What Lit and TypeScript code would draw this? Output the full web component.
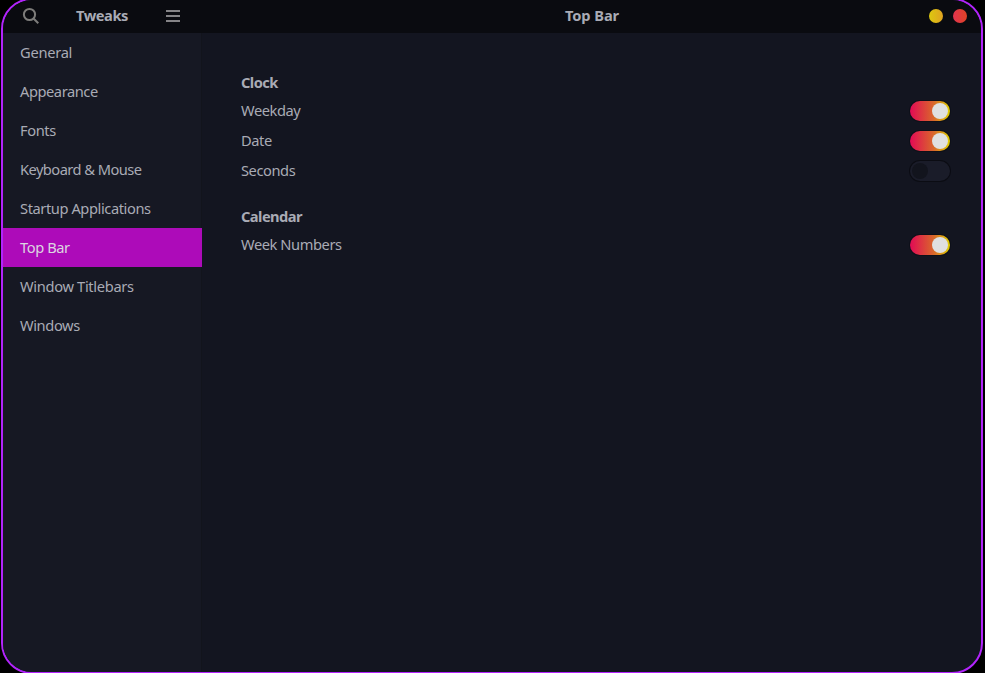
import { LitElement, html, css } from "lit";
import { customElement, property } from "lit/decorators.js";
import { classMap } from "lit/directives/class-map.js";
import { styleMap } from "lit/directives/style-map.js";

@customElement("tweak-switch")
class TweakSwitch extends LitElement {
  @property({ type: Boolean, reflect: true }) on = false;

  static styles = css`
    :host {
      display: flex;
      box-sizing: border-box;
      width: 40px;
      height: 20px;
      padding: 2px;
      border-radius: 10px;
      background: #1a1c29;
      box-shadow: 0 0 0 1px #0b0c13;
    }
    :host([on]) {
      justify-content: flex-end;
      background: linear-gradient(to right, #e20a55, #d9692a 60%, #e0d000);
      box-shadow: 0 0 0 1px #0e1019;
    }
    .knob {
      width: 16px;
      height: 16px;
      border-radius: 50%;
      background: #12141d;
    }
    :host([on]) .knob {
      background: #e0e0e0;
    }
  `;

  render() {
    return html`<div class="knob"></div>`;
  }
}

/* Each page label with its tracking in pixels. */
const PAGES: [string, number][] = [
  ["General", -0.27],
  ["Appearance", -0.45],
  ["Fonts", -0.42],
  ["Keyboard & Mouse", -0.55],
  ["Startup Applications", -0.42],
  ["Top Bar", -0.42],
  ["Window Titlebars", -0.33],
  ["Windows", -0.4],
];

const GROUPS = [
  {
    title: "Clock",
    rows: [
      { label: "Weekday", on: true },
      { label: "Date", on: true },
      { label: "Seconds", on: false },
    ],
  },
  { title: "Calendar", rows: [{ label: "Week Numbers", on: true }] },
];

@customElement("app-root")
class AppRoot extends LitElement {
  @property() current = "Top Bar";

  static styles = css`
    :host {
      display: block;
      height: 673px;
      overflow: hidden;
      background: #000;
      color: #a9abb5;
      font: 14.67px/20px "Noto Sans", sans-serif;
    }
    .window {
      box-sizing: border-box;
      width: 982px;
      height: 676px;
      margin: -2px 0 0 1px;
      border: 2px solid #b224fb;
      border-radius: 31px;
      overflow: hidden;
      display: grid;
      grid-template: 33px 1fr / 199px 1fr;
      background: #131520;
    }
    .bar {
      display: flex;
      align-items: center;
      background: #0a0b10;
      font-weight: 700;
    }
    .left {
      padding: 0 22px 0 19px;
      justify-content: space-between;
      letter-spacing: -0.45px;
    }
    .left span {
      margin-right: 2px;
    }
    .right {
      justify-content: center;
      position: relative;
      letter-spacing: -0.1px;
    }
    .right span {
      margin-left: 1px;
    }
    .bar span {
      margin-top: -4px;
    }
    .bar svg {
      display: block;
      margin-top: -1px;
    }
    .buttons {
      position: absolute;
      right: 14px;
      top: 9px;
      display: flex;
      gap: 10px;
    }
    .dot {
      width: 14px;
      height: 14px;
      border-radius: 50%;
    }
    .minimize {
      background: linear-gradient(to right, #dcc80f, #e0a321);
    }
    .close {
      background: linear-gradient(to right, #e2344f, #e04326);
    }
    .side {
      background: #161823;
      box-shadow: inset -1px 0 #12141c;
    }
    .item {
      height: 39px;
      box-sizing: border-box;
      padding: 9px 17px 10px;
      white-space: nowrap;
    }
    .selected {
      background: #ad0bb9;
      color: #dcd5e0;
    }
    .content {
      padding: 39px 31px 0 39px;
      letter-spacing: -0.43px;
    }
    .group {
      margin-bottom: 21px;
    }
    .title {
      height: 24px;
      font-weight: 700;
      letter-spacing: -0.55px;
    }
    .group + .group {
      margin-top: -1px;
    }
    .row {
      height: 30px;
      display: flex;
      align-items: center;
      justify-content: space-between;
    }
    .row span {
      margin-top: -2px;
    }
  `;

  render() {
    return html`
      <div class="window">
        <div class="bar left">
          <svg width="18" height="18" viewBox="0 0 18 18" fill="none" stroke="#7d7c7a" stroke-width="2">
            <circle cx="7.5" cy="7.5" r="5.6" />
            <path d="M11.5 11.5L16.3 16.3" />
          </svg>
          <span>Tweaks</span>
          <svg width="14" height="12" viewBox="0 0 14 12" fill="#858487">
            <path d="M0 0h14v2H0zM0 5h14v2H0zM0 10h14v2H0z" />
          </svg>
        </div>
        <div class="bar right">
          <span>${this.current}</span>
          <div class="buttons">
            <div class="dot minimize"></div>
            <div class="dot close"></div>
          </div>
        </div>
        <div class="side">
          ${PAGES.map(
            ([name, tracking]) => html`<div
              class=${classMap({ item: true, selected: name === this.current })}
              style=${styleMap({ letterSpacing: `${tracking}px` })}
            >${name}</div>`
          )}
        </div>
        <div class="content">
          ${GROUPS.map(
            (g) => html`<div class="group">
              <div class="title">${g.title}</div>
              ${g.rows.map(
                (r) => html`<div class="row">
                  <span>${r.label}</span><tweak-switch ?on=${r.on}></tweak-switch>
                </div>`
              )}
            </div>`
          )}
        </div>
      </div>
    `;
  }
}
